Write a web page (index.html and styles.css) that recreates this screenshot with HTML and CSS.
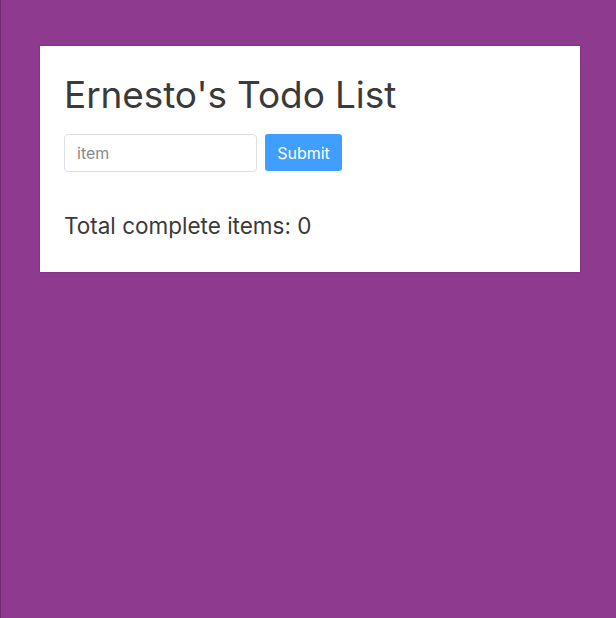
FILE: index.html
```html
<!DOCTYPE html>
<html>
<head>
<meta charset="utf-8">
<link rel="stylesheet" href="styles.css">
</head>
<body>
<main class="card">
  <h1 class="title">Ernesto's Todo List</h1>
  <form class="add-form">
    <input class="item-input" type="text" placeholder="item">
    <button class="submit-btn" type="button">Submit</button>
  </form>
  <p class="total">Total complete items: 0</p>
</main>
</body>
</html>
```
FILE: styles.css
```css
html, body {
  margin: 0;
  height: 100%;
}
body {
  background: #8e3a8f;
  border-left: 1px solid #6f2a70;
  box-sizing: border-box;
  font-family: Inter, Roboto, sans-serif;
  padding: 46px 0 0 39px;
}
.card {
  width: 540px;
  box-sizing: border-box;
  background: #fff;
  padding: 24px 24px 31px 24px;
  box-shadow: 0 0 2px rgba(0,0,0,0.25);
}
.title {
  margin: 0;
  font-size: 37px;
  font-weight: 400;
  color: #3a3a3a;
  line-height: 50px;
  letter-spacing: -0.1px;
}
.add-form {
  display: flex;
  gap: 8px;
  margin-top: 14px;
}
.item-input {
  width: 193px;
  height: 38px;
  box-sizing: border-box;
  border: 1px solid #dcdfe6;
  border-radius: 4px;
  padding: 0 12px;
  font-family: inherit;
  font-size: 16px;
  color: #606266;
  outline: none;
}
.item-input::placeholder {
  color: #8a8a8a;
}
.submit-btn {
  width: 77px;
  height: 37px;
  border: none;
  border-radius: 3px;
  background: #409eff;
  color: #fff;
  font-family: inherit;
  font-size: 16px;
  padding: 0;
}
.total {
  margin: 39px 0 0 0;
  font-size: 22.5px;
  color: #3a3a3a;
  line-height: 30px;
}
```
